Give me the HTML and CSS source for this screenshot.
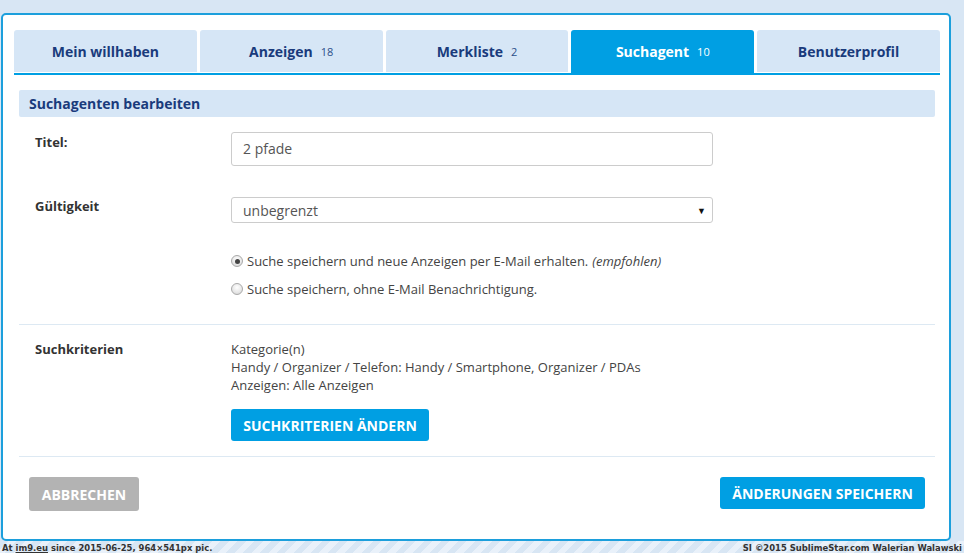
FILE: index.html
```html
<!DOCTYPE html>
<html lang="de">
<head>
<meta charset="utf-8">
<title>Suchagent bearbeiten</title>
<link rel="stylesheet" href="styles.css">
</head>
<body>
<div class="panel">
  <nav class="tabs">
    <div class="tab">Mein willhaben</div>
    <div class="tab">Anzeigen <span class="count">18</span></div>
    <div class="tab">Merkliste <span class="count">2</span></div>
    <div class="tab active">Suchagent <span class="count">10</span></div>
    <div class="tab">Benutzerprofil</div>
  </nav>
  <div class="content">
    <h2 class="section-title">Suchagenten bearbeiten</h2>
    <div class="row row-title">
      <div class="label">Titel:</div>
      <div class="field"><div class="input">2 pfade</div></div>
    </div>
    <div class="row row-valid">
      <div class="label">Gültigkeit</div>
      <div class="field">
        <div class="select"><span>unbegrenzt</span><span class="arrow">▼</span></div>
        <div class="radios">
          <div class="radio-line"><span class="radio checked"></span>Suche speichern und neue Anzeigen per E-Mail erhalten. <em>(empfohlen)</em></div>
          <div class="radio-line"><span class="radio"></span>Suche speichern, ohne E-Mail Benachrichtigung.</div>
        </div>
      </div>
    </div>
    <div class="row row-criteria">
      <div class="label">Suchkriterien</div>
      <div class="field">
        <div class="text">Kategorie(n)</div>
        <div class="text">Handy / Organizer / Telefon: Handy / Smartphone, Organizer / PDAs</div>
        <div class="text">Anzeigen: Alle Anzeigen</div>
        <div class="btn btn-blue btn-criteria">SUCHKRITERIEN ÄNDERN</div>
      </div>
    </div>
    <div class="actions">
      <div class="btn btn-grey">ABBRECHEN</div>
      <div class="btn btn-blue btn-save">ÄNDERUNGEN SPEICHERN</div>
    </div>
  </div>
</div>
<div class="footer">
  <span>At <u>im9.eu</u> since 2015-06-25, 964×541px pic.</span>
  <span>SI ©2015 SublimeStar.com Walerian Walawski</span>
</div>
</body>
</html>
```
FILE: styles.css
```css
* { box-sizing: border-box; }
html, body { margin: 0; padding: 0; }
body {
  background: #d8e6f4;
  font-family: "Open Sans", "Noto Sans", sans-serif;
  color: #444;
  width: 964px;
  height: 553px;
  overflow: hidden;
}
.panel {
  margin: 13px 0 0 1px;
  width: 950px;
  height: 528px;
  background: #fff;
  border: 2px solid #1c9fdc;
  border-radius: 5px;
  padding: 15px 9px 0 11px;
}
.tabs {
  display: flex;
  gap: 3px;
  border-bottom: 2px solid #009fe3;
}
.tab {
  flex: 1;
  height: 43px;
  display: flex;
  align-items: center;
  justify-content: center;
  background: #d6e6f6;
  border-bottom: 1px solid #fff;
  border-radius: 3px 3px 0 0;
  color: #1a3b7c;
  font-weight: 700;
  font-size: 14px;
}
.tab.active {
  background: #009fe3;
  border-bottom-color: #009fe3;
  color: #fff;
}
.count {
  font-weight: 400;
  font-size: 11px;
  margin-left: 8px;
  color: #2c4f8a;
}
.tab.active .count { color: #fff; }
.content {
  margin: 15px 5px 0 5px;
}
.section-title {
  margin: 0;
  height: 27px;
  background: #d6e6f6;
  border-radius: 2px;
  color: #1a3b7c;
  font-size: 14px;
  font-weight: 700;
  line-height: 27px;
  padding-left: 10px;
}
.row {
  display: grid;
  grid-template-columns: 212px 1fr;
}
.label {
  padding-left: 16px;
  font-weight: 700;
  font-size: 13px;
  line-height: 18px;
  color: #333;
}
.row-title { margin-top: 15px; }
.row-title .label { padding-top: 1px; }
.input {
  width: 482px;
  height: 34px;
  border: 1px solid #ccc;
  border-radius: 3px;
  padding: 0 11px;
  font-size: 14px;
  line-height: 32px;
  color: #555;
}
.row-valid { margin-top: 31px; padding-bottom: 26px; border-bottom: 1px solid #dde9f3; }
.select {
  width: 482px;
  height: 26px;
  border: 1px solid #ccc;
  border-radius: 3px;
  padding: 0 6px 0 11px;
  display: flex;
  justify-content: space-between;
  align-items: center;
  font-size: 14px;
  color: #555;
}
.arrow { font-size: 9px; color: #111; }
.radios {
  margin-top: 29px;
  display: flex;
  flex-direction: column;
  gap: 10px;
}
.radio-line {
  display: flex;
  align-items: center;
  font-size: 13px;
  line-height: 18px;
  color: #444;
}
.radio-line em { margin-left: 4px; }
.radio {
  width: 12px;
  height: 12px;
  border-radius: 50%;
  border: 1px solid #a9a9a9;
  background: radial-gradient(circle at 50% 35%, #fff 0%, #e6e6e6 60%, #cfcfcf 100%);
  margin-right: 4px;
  display: inline-flex;
  align-items: center;
  justify-content: center;
}
.radio.checked::after {
  content: "";
  width: 5px;
  height: 5px;
  border-radius: 50%;
  background: #444;
}
.row-criteria {
  padding-top: 15px;
  padding-bottom: 15px;
  border-bottom: 1px solid #dde9f3;
}
.text {
  font-size: 13px;
  line-height: 18px;
  color: #444;
}
.btn {
  display: inline-flex;
  align-items: center;
  justify-content: center;
  color: #fff;
  font-weight: 700;
  font-size: 14px;
  border-radius: 3px;
}
.btn-blue { background: #009fe3; }
.btn-grey { background: #b3b3b3; width: 110px; height: 34px; }
.btn-criteria { margin-top: 15px; width: 198px; height: 32px; }
.actions {
  display: flex;
  justify-content: space-between;
  padding: 20px 10px 0 10px;
}
.btn-save { width: 205px; height: 32px; }
.footer {
  height: 12px;
  display: flex;
  justify-content: space-between;
  align-items: center;
  padding: 0 2px 0 2px;
  font-family: "DejaVu Sans Condensed", "DejaVu Sans", sans-serif;
  font-stretch: condensed;
  font-weight: 700;
  font-size: 9.4px;
  color: #333;
  background: repeating-linear-gradient(135deg, #d8e6f4 0 6px, #e9f1fa 6px 12px);
}
```
